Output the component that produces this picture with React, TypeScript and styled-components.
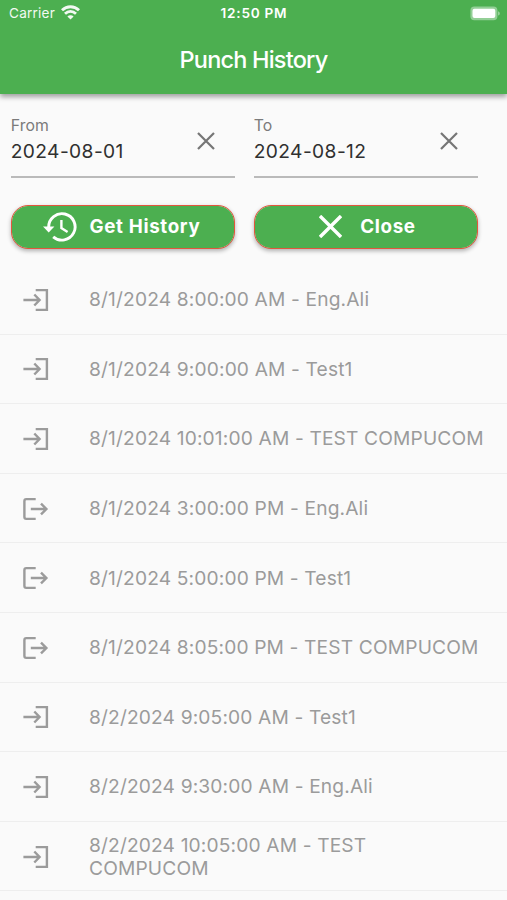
import React from "react";
import styled, { createGlobalStyle } from "styled-components";

const Global = createGlobalStyle`
  * { box-sizing: border-box; }
  html, body { margin: 0; height: 100%; background: #fafafa; overflow: hidden; }
  button { font-family: inherit; }
  svg { display: block; flex: none; }
`;

const Screen = styled.div`
  width: 507px;
  height: 900px;
  overflow: hidden;
  background: #fafafa;
  font-family: Inter, "Liberation Sans", sans-serif;
`;

const Header = styled.header`
  height: 94px;
  background: #4caf50;
  color: #fff;
  box-shadow: 0 3px 5px rgba(0, 0, 0, 0.36);
`;

const StatusBar = styled.div`
  display: grid;
  grid-template-columns: 1fr auto 1fr;
  align-items: center;
  height: 27px;
  padding: 0 7px 0 9px;
  font-size: 13.6px;
  line-height: 27px;
`;

const Carrier = styled.div`
  display: flex;
  align-items: center;
  gap: 6.5px;
  letter-spacing: 0.2px;
  opacity: 0.93;

  svg {
    margin-bottom: 2px;
  }
`;

const Clock = styled.div`
  margin-right: 1px;
  font-weight: 600;
  letter-spacing: 0.75px;
`;

const Battery = styled.div`
  display: flex;
  justify-content: flex-end;
  padding-bottom: 1px;
`;

const Title = styled.h1`
  margin: 0;
  height: 67px;
  line-height: 66px;
  text-align: center;
  font-size: 23.5px;
  font-weight: 450;
  letter-spacing: -0.8px;
`;

const Filters = styled.section`
  display: grid;
  grid-template-columns: 224px 224px;
  column-gap: 19px;
  row-gap: 26.5px;
  padding: 0 0 0 10.7px;
  height: 171px;
  align-content: start;
`;

const Field = styled.div`
  display: flex;
  justify-content: space-between;
  height: 84px;
  padding: 22px 20px 0 0;
  border-bottom: 2px solid #bababa;
`;

const FieldLabel = styled.div`
  height: 21px;
  line-height: 20px;
  font-size: 15.8px;
  letter-spacing: 0.1px;
  color: #7b7b7b;
`;

const FieldValue = styled.div`
  line-height: 28px;
  font-size: 19.2px;
  letter-spacing: 0.4px;
  color: #303030;
`;

const ClearButton = styled.button`
  align-self: flex-start;
  margin: 16px 0 0;
  padding: 0;
  border: 0;
  background: none;
  color: #757575;
`;

const Action = styled.button<{ $gap: number; $inset: string }>`
  display: flex;
  align-items: center;
  justify-content: center;
  gap: ${(p) => p.$gap}px;
  height: 44px;
  padding: ${(p) => p.$inset};
  border: 1px solid #e2573c;
  border-radius: 17px;
  background: #4caf50;
  background-clip: padding-box;
  color: #fff;
  font-size: 18.8px;
  line-height: 22px;
  font-weight: 700;
  letter-spacing: 0.65px;
  box-shadow: 0 2px 4px rgba(0, 0, 0, 0.3);
`;

const List = styled.ul`
  margin: 0;
  padding: 0;
  list-style: none;
`;

const Row = styled.li`
  display: flex;
  align-items: center;
  gap: 40px;
  height: 69.6px;
  padding: 1px 10px 0 22px;
  border-bottom: 1px solid #eeeeee;
  color: #9b9b9b;
`;

const RowText = styled.span`
  font-size: 19.2px;
  line-height: 23px;
  letter-spacing: 0.14px;
  white-space: pre-line;
`;

const Wifi = () => (
  <svg width="19" height="15" viewBox="0 0 19 15" fill="none" stroke="#fff" strokeWidth="2.9">
    <path d="M1 5.3C6 .6 13 .6 18 5.3" />
    <path d="M4 8.8c3.3-3 7.7-3 11 0" />
    <path d="M9.5 14.4 6.4 11.4c1.6-1.6 4.6-1.6 6.2 0Z" fill="#fff" stroke="none" />
  </svg>
);

const BatteryFull = () => (
  <svg width="30" height="15" viewBox="0 0 30 15">
    <rect x="0.4" y="0.6" width="27" height="13.6" rx="4" fill="#fff" fillOpacity=".4" />
    <rect x="2.5" y="2.8" width="22.8" height="9.2" rx="2" fill="#fff" />
    <path d="M28.2 5.2c2 .8 2 3.6 0 4.4Z" fill="#fff" fillOpacity=".5" />
  </svg>
);

const Cross = ({ size, stroke }: { size: number; stroke: number }) => (
  <svg width={size} height={size} viewBox={`0 0 ${size} ${size}`} fill="none" stroke="currentColor" strokeWidth={stroke}>
    <path d={`M1 1 ${size - 1} ${size - 1}M${size - 1} 1 1 ${size - 1}`} />
  </svg>
);

const HistoryIcon = () => (
  <svg width="34" height="30" viewBox="0 0 34 30" fill="none" stroke="#fff" strokeWidth="2.9">
    <path d="M5.7 16.5V15A13.2 13.2 0 1 1 10.2 24.8" />
    <path d="M0 14.6H11.4L5.7 20.4Z" fill="#fff" stroke="none" />
    <path d="M18.4 8v8.1l6.2 3.8" strokeWidth="2.4" />
  </svg>
);

const PunchIn = () => (
  <svg width="27" height="24" viewBox="0 0 27 24" fill="none" stroke="currentColor" strokeWidth="2.4">
    <path d="M13.7 2.1h11.2v19.8H13.7" />
    <path d="M1.4 12h15.8M12.3 6.5 17.6 12l-5.3 5.5" />
  </svg>
);

const PunchOut = () => (
  <svg width="27" height="24" viewBox="0 0 27 24" fill="none" stroke="currentColor" strokeWidth="2.4">
    <path d="M13.7 2.1H4.2Q2.4 2.1 2.4 3.9v16.2Q2.4 21.9 4.2 21.9h9.5" />
    <path d="M8.8 12h15.7M19 6.6 24.4 12 19 17.4" />
  </svg>
);

const punches = [
  { text: "8/1/2024 8:00:00 AM - Eng.Ali", entry: true },
  { text: "8/1/2024 9:00:00 AM - Test1", entry: true },
  { text: "8/1/2024 10:01:00 AM - TEST COMPUCOM", entry: true },
  { text: "8/1/2024 3:00:00 PM - Eng.Ali", entry: false },
  { text: "8/1/2024 5:00:00 PM - Test1", entry: false },
  { text: "8/1/2024 8:05:00 PM - TEST COMPUCOM", entry: false },
  { text: "8/2/2024 9:05:00 AM - Test1", entry: true },
  { text: "8/2/2024 9:30:00 AM - Eng.Ali", entry: true },
  { text: "8/2/2024 10:05:00 AM - TEST\nCOMPUCOM", entry: true },
];

const DateField = ({ label, value }: { label: string; value: string }) => (
  <Field>
    <div>
      <FieldLabel>{label}</FieldLabel>
      <FieldValue>{value}</FieldValue>
    </div>
    <ClearButton aria-label={`Clear ${label}`}>
      <Cross size={18} stroke={2.2} />
    </ClearButton>
  </Field>
);

export default function App() {
  return (
    <>
      <Global />
      <Screen>
        <Header>
          <StatusBar>
            <Carrier>
              Carrier <Wifi />
            </Carrier>
            <Clock>12:50 PM</Clock>
            <Battery>
              <BatteryFull />
            </Battery>
          </StatusBar>
          <Title>Punch History</Title>
        </Header>
        <Filters>
          <DateField label="From" value="2024-08-01" />
          <DateField label="To" value="2024-08-12" />
          <Action $gap={12.5} $inset="0 2px 0 0">
            <HistoryIcon />
            Get History
          </Action>
          <Action $gap={18.5} $inset="0 0 0 3px">
            <Cross size={23} stroke={3.4} />
            Close
          </Action>
        </Filters>
        <List>
          {punches.map((p) => (
            <Row key={p.text}>
              {p.entry ? <PunchIn /> : <PunchOut />}
              <RowText>{p.text}</RowText>
            </Row>
          ))}
        </List>
      </Screen>
    </>
  );
}
